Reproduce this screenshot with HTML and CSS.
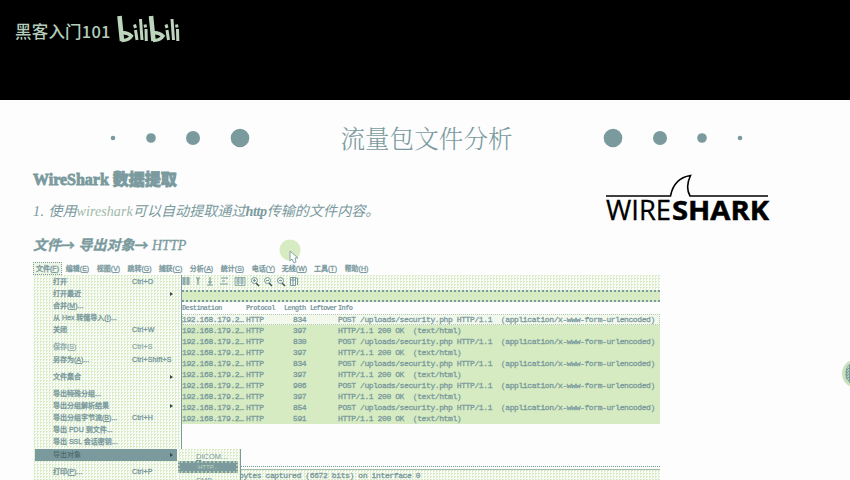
FILE: index.html
```
<!DOCTYPE html>
<html lang="zh-CN">
<head>
<meta charset="utf-8">
<title>流量包文件分析</title>
<link rel="stylesheet" href="styles.css">
</head>
<body>
<header class="top">
  <span class="channel">黑客入门101</span>
  <svg class="bili" width="64" height="30" viewBox="0 0 64 30" fill="none">
    <g id="half">
      <path d="M2.5 1 L5 26" stroke-width="4.6"/>
      <path d="M4.5 18 Q10 17 14.500 21 Q12 25.500 4.500 25.500" stroke-width="3.4"/>
      <path d="M18.5 15 L20 25M23.5 4 L25 25M29 14 L29.3 26" stroke-width="3"/>
      <path d="M17.500 9.500 L18.5 13M28 9.500 L28.5 12.500" stroke-width="3"/>
    </g>
    <use href="#half" x="31.5"/>
  </svg>
</header>
<main class="slide">
  <div class="heading">
    <svg class="dots" width="140" height="20" viewBox="0 0 140 20"><circle cx="3" cy="10" r="2.3"/><circle cx="41" cy="10" r="4.8"/><circle cx="83" cy="10" r="7"/><circle cx="130" cy="10" r="9.3"/></svg>
    <h1>流量包文件分析</h1>
    <svg class="dots" width="140" height="20" viewBox="0 0 140 20"><circle cx="10" cy="10" r="9.3"/><circle cx="57" cy="10" r="7"/><circle cx="99" cy="10" r="4.8"/><circle cx="137" cy="10" r="2.3"/></svg>
  </div>
  <div class="intro">
    <div class="copy">
      <h2>WireShark 数据提取</h2>
      <p class="point"><span class="num">1. </span>使用<span class="lat">wireshark</span>可以自动提取通过<b>http</b>传输的文件内容。</p>
      <p class="path">文件<em>→</em> 导出对象<em>→</em> <span>HTTP</span></p>
    </div>
    <svg class="logo" width="166" height="50" viewBox="0 0 166 50">
      <path d="M2 15H66.500Q70 -3 86.500 -5.500Q81 6 86 15H164" transform="translate(0 6)" fill="none" stroke="#000" stroke-width="1.6"/>
      <text x="2" y="45" textLength="65" lengthAdjust="spacingAndGlyphs" class="wire">WIRE</text>
      <text x="68" y="45" textLength="97" lengthAdjust="spacingAndGlyphs" class="shark">SHARK</text>
    </svg>
  </div>
  <section class="app">
    <nav class="menubar"><span class="on">文件(<u>F</u>)</span><span>编辑(<u>E</u>)</span><span>视图(<u>V</u>)</span><span>跳转(<u>G</u>)</span><span>捕获(<u>C</u>)</span><span>分析(<u>A</u>)</span><span>统计(<u>S</u>)</span><span>电话(<u>Y</u>)</span><span>无线(<u>W</u>)</span><span>工具(<u>T</u>)</span><span>帮助(<u>H</u>)</span></nav>
    <div class="toolbar">
      <svg width="120" height="11" viewBox="0 0 120 11" fill="none" stroke="#7a9a9e">
        <path d="M2 2h8M2 4h8M2 6h8M2 8h8M4 1v8M8 1v8M16 2h4M18 2v7M17 4h2M30 1v4M28 6h4M30 5v4M27 9h6M41 2h7M40 8h8M42 5h3" stroke-width="1.2"/>
        <path d="M55 1.500h10v8H55zM56 3h8M56 5h8M56 7h8M58 2v7M62 2v7" stroke-width=".8"/>
        <path d="M76 7l3 3M89 7l3 3M102 7l3 3" stroke="#3c5053" stroke-width="1.5"/>
        <circle cx="74.500" cy="4.500" r="3"/><circle cx="87.500" cy="4.500" r="3"/><circle cx="100.500" cy="4.500" r="3"/>
        <path d="M73 4.500h3M74.500 3v3M86 4.500h3M99 4.500h3M110.500 1.500h5v8h-5zM113 1v9M111 4h5M115.500 2h2v7"/>
      </svg>
    </div>
    <div class="filter"></div>
    <table>
      <colgroup><col class="c1"><col class="c2"><col class="c3"><col class="c4"><col></colgroup>
      <thead><tr><th>Destination</th><th>Protocol</th><th>Length</th><th class="tight">Leftover</th><th>Info</th></tr></thead>
      <tbody>
        <tr class="first"><td>192.168.179.2…</td><td>HTTP</td><td class="n">834</td><td></td><td>POST /uploads/security.php HTTP/1.1  (application/x-www-form-urlencoded)</td></tr>
        <tr><td>192.168.179.2…</td><td>HTTP</td><td class="n">397</td><td></td><td>HTTP/1.1 200 OK  (text/html)</td></tr>
        <tr><td>192.168.179.2…</td><td>HTTP</td><td class="n">830</td><td></td><td>POST /uploads/security.php HTTP/1.1  (application/x-www-form-urlencoded)</td></tr>
        <tr><td>192.168.179.2…</td><td>HTTP</td><td class="n">397</td><td></td><td>HTTP/1.1 200 OK  (text/html)</td></tr>
        <tr><td>192.168.179.2…</td><td>HTTP</td><td class="n">834</td><td></td><td>POST /uploads/security.php HTTP/1.1  (application/x-www-form-urlencoded)</td></tr>
        <tr><td>192.168.179.2…</td><td>HTTP</td><td class="n">397</td><td></td><td>HTTP/1.1 200 OK  (text/html)</td></tr>
        <tr><td>192.168.179.2…</td><td>HTTP</td><td class="n">906</td><td></td><td>POST /uploads/security.php HTTP/1.1  (application/x-www-form-urlencoded)</td></tr>
        <tr><td>192.168.179.2…</td><td>HTTP</td><td class="n">397</td><td></td><td>HTTP/1.1 200 OK  (text/html)</td></tr>
        <tr><td>192.168.179.2…</td><td>HTTP</td><td class="n">854</td><td></td><td>POST /uploads/security.php HTTP/1.1  (application/x-www-form-urlencoded)</td></tr>
        <tr><td>192.168.179.2…</td><td>HTTP</td><td class="n">591</td><td></td><td>HTTP/1.1 200 OK  (text/html)</td></tr>
      </tbody>
    </table>
    <div class="detail">bytes captured (6672 bits) on interface 0</div>
    <div class="menu">
      <div class="item">打开<kbd>Ctrl+O</kbd></div>
      <div class="item">打开最近<i></i></div>
      <div class="item">合并(<u>M</u>)...</div>
      <div class="item">从 Hex 转储导入(<u>I</u>)...</div>
      <div class="item">关闭<kbd>Ctrl+W</kbd></div>
      <hr>
      <div class="item off">保存(<u>S</u>)<kbd>Ctrl+S</kbd></div>
      <div class="item">另存为(<u>A</u>)...<kbd>Ctrl+Shift+S</kbd></div>
      <hr>
      <div class="item">文件集合<i></i></div>
      <hr>
      <div class="item">导出特殊分组...</div>
      <div class="item">导出分组解析结果<i></i></div>
      <div class="item">导出分组字节流(<u>B</u>)...<kbd>Ctrl+H</kbd></div>
      <div class="item">导出 PDU 到文件...</div>
      <div class="item">导出 SSL 会话密钥...</div>
      <div class="item sel">导出对象<i></i></div>
      <hr>
      <div class="item">打印(<u>P</u>)...<kbd>Ctrl+P</kbd></div>
    </div>
    <div class="submenu">
      <div class="sub"><u>D</u>ICOM...</div>
      <div class="sub hot">HTTP...</div>
      <div class="sub">SMB...</div>
    </div>
  </section>
  <svg class="pointer" width="24" height="26" viewBox="0 0 24 26"><circle cx="11" cy="11" r="10.500" fill="#d6ebc1"/><path d="M11 12v10l2-2 2 4 2-1-1-4h3z" fill="#fdfdfd" stroke="#7a9a9e" stroke-width=".9"/></svg>
  <div class="bubble"></div>
</main>
</body>
</html>
```
FILE: styles.css
```
:root {
  --teal: #7a9a9e;
  --green: #d6ebc1;
  --paper: #fdfdfd;
}
* { box-sizing: border-box; }
body {
  margin: 0;
  width: 850px;
  height: 480px;
  overflow: hidden;
  background: var(--paper);
  color: var(--teal);
  font-family: "Liberation Sans", "Noto Sans CJK SC", sans-serif;
}
.top {
  height: 100px;
  background: #000;
  display: flex;
  align-items: flex-start;
  padding: 15px 0 0 15px;
}
.channel {
  width: 102px;
  font: 500 16.5px/32px "Noto Sans CJK SC", sans-serif;
  color: #b4cdbb;
  letter-spacing: .2px;
  white-space: nowrap;
}
.bili { stroke: #bdd5bd; }
.slide { position: relative; height: 380px; overflow: hidden; }
.heading {
  height: 64px;
  padding: 12px 107px 0 110px;
  display: flex;
  justify-content: space-between;
  align-items: flex-start;
}
.dots { margin-top: 16px; fill: var(--teal); }
h1 {
  margin: 0;
  font: 300 24.6px/52px "Noto Serif CJK SC", "Noto Sans CJK SC", serif;
  white-space: nowrap;
}
.intro {
  height: 98px;
  padding: 0 80px 0 33px;
  display: flex;
  justify-content: space-between;
  align-items: flex-start;
}
.copy { white-space: nowrap; }
h2 {
  margin: 0;
  font: 900 16px/32px "Liberation Serif", "Noto Sans CJK SC", serif;
  -webkit-text-stroke: .8px var(--teal);
}
p { margin: 0; }
.point {
  font: italic 400 14.1px/30px "Liberation Serif", "Noto Sans CJK SC", serif;
}
.num { letter-spacing: .4px; }
.lat { letter-spacing: .05px; color: #9db9a9; }
.point b { font-weight: 700; letter-spacing: -.4px; }
.path {
  margin-top: 3px;
  font: italic 700 14px/30px "Liberation Serif", "Noto Sans CJK SC", serif;
  -webkit-text-stroke: .3px var(--teal);
}
.path em { font-family: "Noto Sans CJK SC", sans-serif; font-style: normal; }
.path span { font-weight: 400; }
.logo { margin-top: 11px; overflow: visible; }
.wire { font: 27px "Open Sans", sans-serif; stroke: #000; stroke-width: .3px; }
.shark { font: 700 27px "Open Sans", sans-serif; stroke: #000; stroke-width: .5px; }
.app {
  position: relative;
  margin-left: 33px;
  width: 627px;
  height: 218px;
}
.menubar {
  height: 13px;
  display: flex;
  font-size: 7px;
  line-height: 13px;
  font-weight: 500;
  -webkit-text-stroke: .3px var(--teal);
}
.menubar span { width: 31px; white-space: nowrap; text-align: center; }
.menubar .on { width: 29px; background: #eef5e7; border: 1px dotted var(--teal); line-height: 11px; }
.toolbar, .menu, .submenu, .detail {
  background-color: var(--paper);
  background-image: conic-gradient(var(--green) 25%, transparent 0 50%, #eff7e9 0 75%, transparent 0);
  background-size: 3px 3px;
}
.toolbar { height: 15px; padding: 1px 0 0 147px; }
.toolbar svg { display: block; }
.filter {
  height: 12px;
  background: var(--green);
  border-top: 2px dotted var(--teal);
  border-bottom: 2px dotted var(--teal);
}
table {
  margin-left: 149px;
  width: 478px;
  table-layout: fixed;
  border-collapse: collapse;
  font: 8px/11px "Liberation Mono", monospace;
  letter-spacing: -.4px;
  white-space: pre;
}
.c1 { width: 64px; }
.c2 { width: 38px; }
.c3 { width: 26px; }
.c4 { width: 28px; }
th, td { padding: 0; height: 11px; text-align: left; overflow: visible; }
th { font-size: 7px; font-weight: 700; height: 12px; letter-spacing: -.6px; }
.tight { letter-spacing: -.9px; }
td { -webkit-text-stroke: .3px var(--teal); }
.n { padding-left: 9px; }
tbody tr { background: var(--green); }
tbody .first { background: #f2f8ec; outline: 1px dotted #b1c9b2; outline-offset: -1px; }
.detail {
  margin-top: 42px;
  height: 19px;
  border-top: 1px dotted var(--teal);
  box-shadow: inset 0 2px var(--paper), inset 0 3px #9fb8aa;
  padding: 2px 0 0 206px;
  font: 8px/14px "Liberation Mono", monospace;
  letter-spacing: -.38px;
  -webkit-text-stroke: .3px var(--teal);
}
.menu {
  position: absolute;
  left: 0;
  top: 13px;
  width: 149px;
  height: 205px;
  padding-top: .5px;
  border-right: 1.5px solid var(--teal);
  font-size: 7px;
  font-weight: 500;
  overflow: hidden;
  -webkit-text-stroke: .3px var(--teal);
}
.item {
  position: relative;
  height: 12.2px;
  line-height: 12.2px;
  margin: 0 4px 0 2px;
  padding-left: 18px;
  display: flex;
  white-space: nowrap;
}
.item kbd { position: absolute; left: 97px; font: 7px/12.2px "Liberation Sans", sans-serif; letter-spacing: .15px; }
.item i { position: absolute; right: 4px; top: 4px; border: 2px solid transparent; border-left: 3px solid #34484b; border-right: 0; }
.menu hr { margin: 0; border: 0; height: 4.9px; }
.off { opacity: .75; }
.sel { background: var(--teal); color: #4d676b; -webkit-text-stroke: 0; }
.submenu {
  position: absolute;
  left: 145px;
  top: 187px;
  width: 63px;
  height: 31px;
  overflow: hidden;
  border-right: 1.5px solid var(--teal);
  font-size: 7.5px;
}
.sub { height: 12px; line-height: 15px; padding-left: 18px; }
.hot {
  width: 60px;
  line-height: 8px;
  background: var(--teal);
  border: 2px dotted #aec5ad;
  color: #c4d8bd;
  font-size: 6px;
}
.pointer { position: absolute; left: 279px; top: 139px; }
.bubble {
  position: absolute;
  right: -16px;
  top: 260px;
  width: 24px;
  height: 27px;
  border-radius: 50%;
  border: 3px solid #cbe2bd;
  background: conic-gradient(var(--teal) 25%, #a9c4ad 0 50%, var(--teal) 0 75%, #b9d1b4 0) 0 0 / 3px 3px;
}
```
